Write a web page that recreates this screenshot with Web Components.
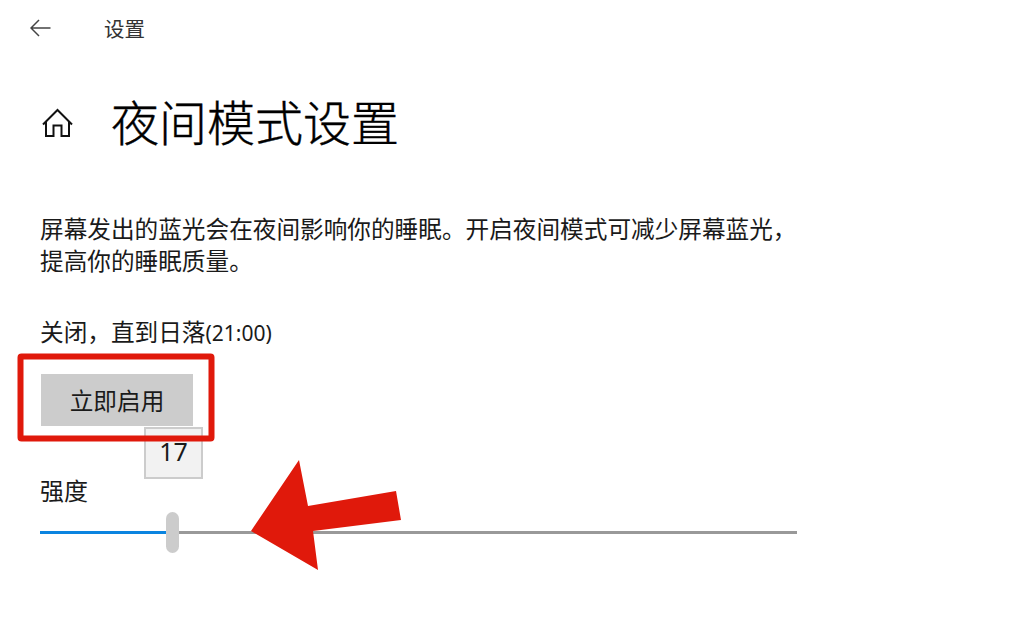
<!DOCTYPE html>
<html lang="zh">
<head>
<meta charset="utf-8">
<title>夜间模式设置</title>
<style>
  html, body { margin: 0; padding: 0; background: #fff; }
  body { width: 1024px; height: 630px; overflow: hidden; font-family: "Noto Sans CJK SC", "Liberation Sans", sans-serif; color: #1a1a1a; }
</style>
</head>
<body>
<settings-page>
  <top-bar label="设置"></top-bar>
  <page-title label="夜间模式设置"></page-title>
  <p-text>屏幕发出的蓝光会在夜间影响你的睡眠。开启夜间模式可减少屏幕蓝光，<br>提高你的睡眠质量。</p-text>
  <status-line time="(21:00)">关闭，直到日落</status-line>
  <action-button label="立即启用"></action-button>
  <strength-slider label="强度" value="17"></strength-slider>
</settings-page>
<script>
class SettingsPage extends HTMLElement {
  constructor() {
    super();
    this.attachShadow({ mode: 'open' }).innerHTML = `
      <style>
        :host { display: block; position: relative; width: 1024px; height: 630px; }
        svg { position: absolute; left: 0; top: 0; }
      </style>
      <slot></slot>
      <svg width="1024" height="630" viewBox="0 0 1024 630">
        <rect x="20.5" y="356.5" width="191" height="82" rx="1" fill="none" stroke="#e0190b" stroke-width="6"/>
        <polygon points="251,531 299,460 308,506 396,491 401,520 313,531 318,570" fill="#e0190b"/>
      </svg>`;
  }
}

class TopBar extends HTMLElement {
  constructor() {
    super();
    this.attachShadow({ mode: 'open' }).innerHTML = `
      <style>
        :host { display: flex; align-items: center; height: 56px; padding-left: 30px; }
        svg { width: 21px; height: 18px; margin-right: 53px; }
        span { font-size: 20.5px; color: #333; line-height: 56px; }
      </style>
      <svg viewBox="0 0 21 18"><path d="M20.5 9H1M9 1L1 9l8 8" fill="none" stroke="#444" stroke-width="1.5"/></svg>
      <span>${this.getAttribute('label')}</span>`;
  }
}

class PageTitle extends HTMLElement {
  constructor() {
    super();
    this.attachShadow({ mode: 'open' }).innerHTML = `
      <style>
        :host { display: flex; align-items: center; height: 72px; margin-top: 30px; padding-left: 42px; }
        svg { width: 31px; height: 31px; margin-right: 38px; }
        h1 { margin: 0 0 4px; font-size: 48px; font-weight: 300; line-height: 72px; color: #000; -webkit-text-stroke: 0.4px #000; }
      </style>
      <svg viewBox="0 0 31 31"><path d="M1 17.5L15.5 3 30 17.5M4 14v15h7.5V18.5h8V29H27V14" fill="none" stroke="#111" stroke-width="2"/></svg>
      <h1>${this.getAttribute('label')}</h1>`;
  }
}

class PText extends HTMLElement {
  constructor() {
    super();
    this.attachShadow({ mode: 'open' }).innerHTML = `
      <style>
        :host { display: block; margin: 54px 0 0 40px; font-size: 23.65px; line-height: 32px; color: #1a1a1a; white-space: nowrap; }
      </style>
      <slot></slot>`;
  }
}

class StatusLine extends HTMLElement {
  constructor() {
    super();
    this.attachShadow({ mode: 'open' }).innerHTML = `
      <style>
        :host { display: block; margin: 38px 0 0 40px; font-size: 23.65px; line-height: 34px; color: #1a1a1a; white-space: nowrap; }
        span { font: 21px "Noto Sans", sans-serif; }
      </style>
      <slot></slot><span>${this.getAttribute('time')}</span>`;
  }
}

class ActionButton extends HTMLElement {
  constructor() {
    super();
    this.attachShadow({ mode: 'open' }).innerHTML = `
      <style>
        :host { display: flex; align-items: center; justify-content: center; width: 152px; height: 52px; margin: 26px 0 0 41px; background: #ccc; font-size: 23.65px; color: #1a1a1a; }
      </style>
      <span>${this.getAttribute('label')}</span>`;
  }
}

class StrengthSlider extends HTMLElement {
  constructor() {
    super();
    this.attachShadow({ mode: 'open' }).innerHTML = `
      <style>
        :host { display: block; position: relative; margin: 47px 0 0 40px; width: 757px; }
        .label { font-size: 24px; line-height: 34px; color: #1a1a1a; }
        .track { display: flex; align-items: center; height: 41px; margin-top: 5px; }
        .fill { width: 126px; height: 3px; background: #0a84e0; }
        .thumb { width: 13px; height: 41px; border-radius: 7px; background: #ccc; flex: none; }
        .rest { flex: 1; height: 3px; background: #999; }
        .tip { position: absolute; left: 104px; top: -46px; box-sizing: border-box; width: 59px; height: 52px; padding-bottom: 4px; background: #f2f2f2; border: 2px solid #ccc; display: flex; align-items: center; justify-content: center; font: 25px "Noto Sans", sans-serif; color: #1a1a1a; }
      </style>
      <div class="tip">${this.getAttribute('value')}</div>
      <div class="label">${this.getAttribute('label')}</div>
      <div class="track"><div class="fill"></div><div class="thumb"></div><div class="rest"></div></div>`;
  }
}

customElements.define('settings-page', SettingsPage);
customElements.define('top-bar', TopBar);
customElements.define('page-title', PageTitle);
customElements.define('p-text', PText);
customElements.define('status-line', StatusLine);
customElements.define('action-button', ActionButton);
customElements.define('strength-slider', StrengthSlider);
</script>
</body>
</html>
